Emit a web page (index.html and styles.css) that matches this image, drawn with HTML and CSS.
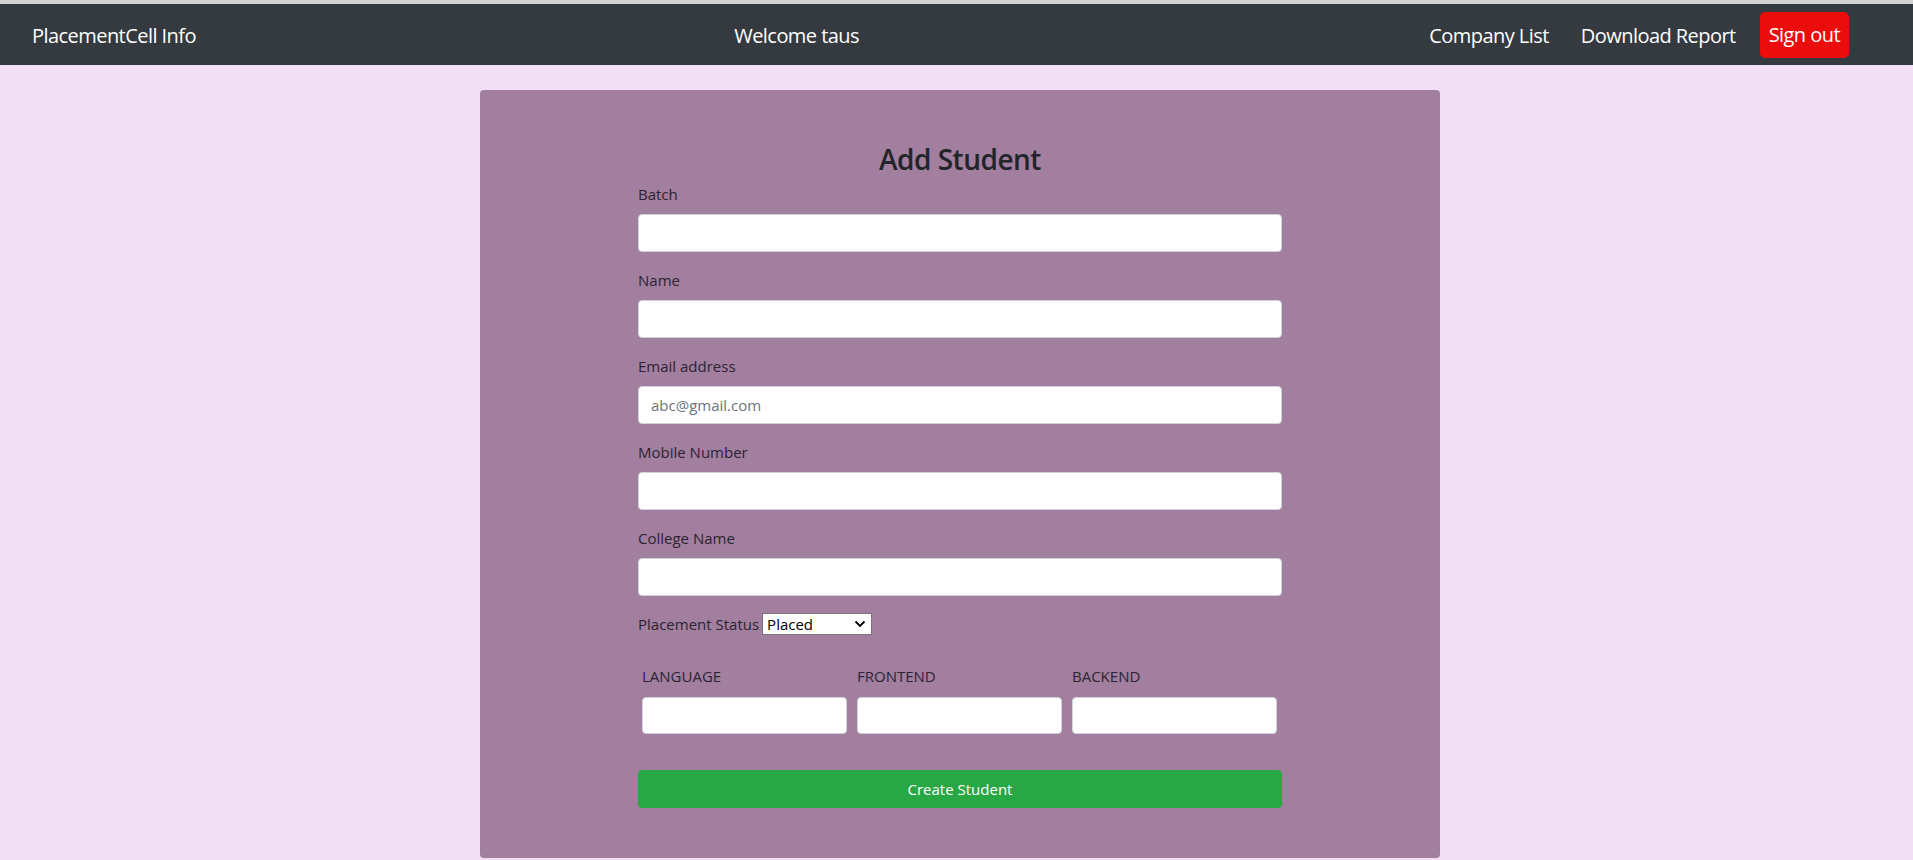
FILE: index.html
```html
<!DOCTYPE html>
<html lang="en">
<head>
<meta charset="utf-8">
<title>Add Student</title>
<link rel="stylesheet" href="styles.css">
</head>
<body>
<nav class="navbar">
  <a class="brand" href="#">PlacementCell Info</a>
  <span class="welcome">Welcome taus</span>
  <div class="nav-right">
    <a class="nav-link" href="#">Company List</a>
    <a class="nav-link" href="#">Download Report</a>
    <a class="btn-signout" href="#">Sign out</a>
  </div>
</nav>
<main class="page">
  <section class="card">
    <form class="form">
      <h3 class="title">Add Student</h3>
      <div class="group">
        <label class="label">Batch</label>
        <input class="control" type="text">
      </div>
      <div class="group">
        <label class="label">Name</label>
        <input class="control" type="text">
      </div>
      <div class="group">
        <label class="label">Email address</label>
        <input class="control" type="email" placeholder="abc@gmail.com">
      </div>
      <div class="group">
        <label class="label">Mobile Number</label>
        <input class="control" type="text">
      </div>
      <div class="group">
        <label class="label">College Name</label>
        <input class="control" type="text">
      </div>
      <div class="status-row">
        <span class="label-inline">Placement Status</span>
        <span class="select-wrap">
          <select class="select"><option>Placed</option><option>Not Placed</option></select>
          <svg class="chev" width="12" height="8" viewBox="0 0 12 8"><path d="M1.5 1.5 L6 6 L10.5 1.5" fill="none" stroke="#000" stroke-width="1.8"/></svg>
        </span>
      </div>
      <div class="scores">
        <span class="score-label">LANGUAGE</span>
        <span class="score-label">FRONTEND</span>
        <span class="score-label">BACKEND</span>
        <input class="control small" type="text">
        <input class="control small" type="text">
        <input class="control small" type="text">
      </div>
      <button class="btn-create" type="button">Create Student</button>
    </form>
  </section>
</main>
</body>
</html>
```
FILE: styles.css
```css
* { box-sizing: border-box; }

html, body { margin: 0; padding: 0; }

body {
  background: #f3e0f7;
  font-family: "Open Sans", "Noto Sans", sans-serif;
  color: #212529;
  border-top: 4px solid #d4d4d6;
  height: 860px;
  overflow: hidden;
}

.navbar {
  display: flex;
  align-items: center;
  height: 61px;
  padding: 9px 16px 7px;
  background: #343a40;
}

.brand {
  margin-left: 16px;
  color: #fff;
  font-size: 20px;
  line-height: 30px;
  text-decoration: none;
  letter-spacing: -0.55px;
}

.welcome {
  margin-left: auto;
  margin-right: auto;
  padding-right: 16px;
  color: #fff;
  font-size: 20px;
  line-height: 30px;
  letter-spacing: -0.55px;
}

.nav-right {
  display: flex;
  align-items: center;
  margin-right: 48px;
}

.nav-link {
  padding: 0 16px;
  color: #fff;
  font-size: 20px;
  line-height: 30px;
  text-decoration: none;
  letter-spacing: -0.55px;
}

.btn-signout {
  margin-left: 8px;
  margin-top: -2px;
  padding: 8px 9px 8px;
  background: #eb0c0c;
  color: #fff;
  font-size: 20px;
  line-height: 30px;
  border-radius: 5px;
  text-decoration: none;
  letter-spacing: -0.55px;
}

.page {
  display: flex;
  justify-content: center;
  padding-left: 7px;
  padding-top: 25px;
}

.card {
  width: 960px;
  background: #a27e9f;
  border-radius: 4px;
  padding: 52px 0 50px;
}

.form {
  width: 644px;
  margin: 0 auto;
}

.title {
  margin: 0 0 6px;
  text-align: center;
  font-size: 28px;
  line-height: 34px;
  font-weight: 600;
  color: #212529;
  letter-spacing: -0.5px;
}

.group {
  margin-bottom: 16px;
}

.label {
  display: block;
  margin-bottom: 8px;
  font-size: 15px;
  line-height: 24px;
  color: #2b2431;
}

.control {
  display: block;
  width: 100%;
  height: 38px;
  padding: 6px 12px;
  background: #fff;
  border: 1px solid #ced4da;
  border-radius: 4px;
  font-family: inherit;
  font-size: 15px;
  color: #495057;
}

.control::placeholder {
  color: #6c757d;
}

.status-row {
  display: flex;
  align-items: center;
  height: 24px;
  margin-top: 2px;
}

.label-inline {
  font-size: 15px;
  line-height: 24px;
  color: #2b2431;
  margin-right: 3px;
}

.select-wrap {
  position: relative;
  display: inline-block;
}

.select {
  appearance: none;
  -webkit-appearance: none;
  display: block;
  width: 110px;
  height: 22px;
  padding: 0 0 0 4px;
  background: #fff;
  border: 1px solid #767676;
  border-radius: 0;
  font-family: inherit;
  font-size: 15px;
  line-height: 20px;
  color: #000;
}

.chev {
  position: absolute;
  right: 6px;
  top: 7px;
  pointer-events: none;
}

.scores {
  display: grid;
  grid-template-columns: repeat(3, 1fr);
  column-gap: 10px;
  row-gap: 9px;
  padding: 0 5px 0 4px;
  margin-top: 28px;
}

.score-label {
  font-size: 15px;
  line-height: 24px;
  color: #2b2431;
}

.control.small {
  height: 37px;
}

.btn-create {
  display: block;
  width: 100%;
  height: 38px;
  margin-top: 36px;
  background: #28a745;
  border: 1px solid #28a745;
  border-radius: 4px;
  color: #fff;
  font-family: inherit;
  font-size: 15px;
  line-height: 24px;
}
```
